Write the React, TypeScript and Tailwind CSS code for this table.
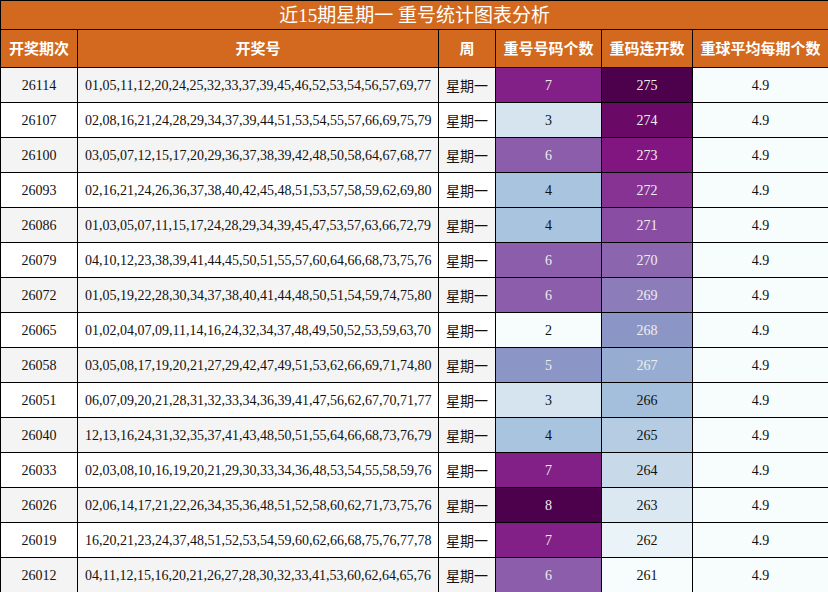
import React from 'react';

const ROWS: { id: string; nums: string; count: number; lian: number }[] = [
    { id: '26114', nums: '01,05,11,12,20,24,25,32,33,37,39,45,46,52,53,54,56,57,69,77', count: 7, lian: 275 },
    { id: '26107', nums: '02,08,16,21,24,28,29,34,37,39,44,51,53,54,55,57,66,69,75,79', count: 3, lian: 274 },
    { id: '26100', nums: '03,05,07,12,15,17,20,29,36,37,38,39,42,48,50,58,64,67,68,77', count: 6, lian: 273 },
    { id: '26093', nums: '02,16,21,24,26,36,37,38,40,42,45,48,51,53,57,58,59,62,69,80', count: 4, lian: 272 },
    { id: '26086', nums: '01,03,05,07,11,15,17,24,28,29,34,39,45,47,53,57,63,66,72,79', count: 4, lian: 271 },
    { id: '26079', nums: '04,10,12,23,38,39,41,44,45,50,51,55,57,60,64,66,68,73,75,76', count: 6, lian: 270 },
    { id: '26072', nums: '01,05,19,22,28,30,34,37,38,40,41,44,48,50,51,54,59,74,75,80', count: 6, lian: 269 },
    { id: '26065', nums: '01,02,04,07,09,11,14,16,24,32,34,37,48,49,50,52,53,59,63,70', count: 2, lian: 268 },
    { id: '26058', nums: '03,05,08,17,19,20,21,27,29,42,47,49,51,53,62,66,69,71,74,80', count: 5, lian: 267 },
    { id: '26051', nums: '06,07,09,20,21,28,31,32,33,34,36,39,41,47,56,62,67,70,71,77', count: 3, lian: 266 },
    { id: '26040', nums: '12,13,16,24,31,32,35,37,41,43,48,50,51,55,64,66,68,73,76,79', count: 4, lian: 265 },
    { id: '26033', nums: '02,03,08,10,16,19,20,21,29,30,33,34,36,48,53,54,55,58,59,76', count: 7, lian: 264 },
    { id: '26026', nums: '02,06,14,17,21,22,26,34,35,36,48,51,52,58,60,62,71,73,75,76', count: 8, lian: 263 },
    { id: '26019', nums: '16,20,21,23,24,37,48,51,52,53,54,59,60,62,66,68,75,76,77,78', count: 7, lian: 262 },
    { id: '26012', nums: '04,11,12,15,16,20,21,26,27,28,30,32,33,41,53,60,62,64,65,76', count: 6, lian: 261 },
];

// BuPu colour scale, light to dark
const COUNT_BG: Record<number, string> = {
    2: 'bg-[#f7fcfd] text-[#111]',
    3: 'bg-[#d5e4ef] text-[#111]',
    4: 'bg-[#a9c4de] text-[#111]',
    5: 'bg-[#8c96c6] text-[#eeeeee]',
    6: 'bg-[#8b5daa] text-[#eeeeee]',
    7: 'bg-[#832087] text-[#eeeeee]',
    8: 'bg-[#4d004b] text-[#eeeeee]',
};

const LIAN_BG: Record<number, string> = {
    261: 'bg-[#f7fcfd] text-[#111]',
    262: 'bg-[#eaf3f8] text-[#111]',
    263: 'bg-[#dbe8f2] text-[#111]',
    264: 'bg-[#c8daea] text-[#111]',
    265: 'bg-[#b6cce3] text-[#111]',
    266: 'bg-[#a3bfdc] text-[#111]',
    267: 'bg-[#96acd1] text-[#eeeeee]',
    268: 'bg-[#8c96c6] text-[#eeeeee]',
    269: 'bg-[#8c7dba] text-[#eeeeee]',
    270: 'bg-[#8b65ae] text-[#eeeeee]',
    271: 'bg-[#894da3] text-[#eeeeee]',
    272: 'bg-[#863394] text-[#eeeeee]',
    273: 'bg-[#821681] text-[#eeeeee]',
    274: 'bg-[#6b0967] text-[#eeeeee]',
    275: 'bg-[#4d004b] text-[#eeeeee]',
};

const HEADS = ['开奖期次', '开奖号', '周', '重号号码个数', '重码连开数', '重球平均每期个数'];

const App: React.FC = () => {
    return (
        <div className="w-[828px] h-[592px] bg-white overflow-hidden font-['Liberation_Serif','Noto_Sans_CJK_SC',serif]">
            <table className="w-[828px] table-fixed border-collapse text-[14px] text-[#111]">
                <colgroup>
                    <col className="w-[77px]" />
                    <col className="w-[361px]" />
                    <col className="w-[57px]" />
                    <col className="w-[106px]" />
                    <col className="w-[91px]" />
                    <col className="w-[136px]" />
                </colgroup>
                <thead>
                    <tr className="h-[29px]">
                        <th colSpan={6} className="border border-black bg-[#d2691e] text-white text-[19px] font-normal leading-none p-0 font-['Liberation_Serif','Noto_Sans_CJK_SC',serif]">
                            近15期星期一 重号统计图表分析
                        </th>
                    </tr>
                    <tr className="h-[38px]">
                        {HEADS.map(h => (
                            <th key={h} className="border border-black bg-[#d2691e] text-white text-[15px] font-bold p-0 font-['Noto_Sans_CJK_SC',sans-serif]">
                                {h}
                            </th>
                        ))}
                    </tr>
                </thead>
                <tbody>
                    {ROWS.map((r, i) => {
                        const zebra = i % 2 === 0 ? 'bg-[#f4f4f4]' : 'bg-white';
                        return (
                            <tr key={r.id} className="h-[35px]">
                                <td className={`border border-black text-center p-0 ${zebra}`}>{r.id}</td>
                                <td className={`border border-black text-left pl-[7px] p-0 whitespace-nowrap ${zebra}`}>{r.nums}</td>
                                <td className={`border border-black text-center p-0 font-['Noto_Sans_CJK_SC',sans-serif] ${zebra}`}>星期一</td>
                                <td className={`border border-black text-center p-0 ${COUNT_BG[r.count]}`}>{r.count}</td>
                                <td className={`border border-black text-center p-0 ${LIAN_BG[r.lian]}`}>{r.lian}</td>
                                <td className="border border-black text-center p-0 bg-[#f7fcfd]">4.9</td>
                            </tr>
                        );
                    })}
                </tbody>
            </table>
        </div>
    );
};

export default App;
